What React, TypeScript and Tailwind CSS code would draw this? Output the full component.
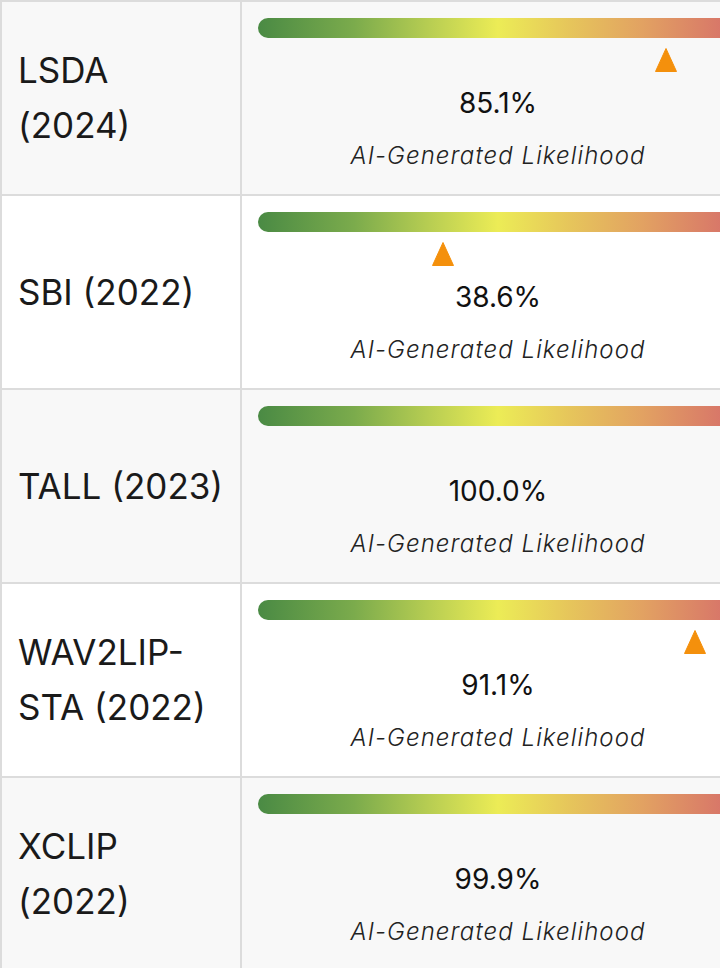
import React from 'react';

type Detector = {
  name: string;
  score: number;
};

const detectors: Detector[] = [
  { name: 'LSDA (2024)', score: 85.1 },
  { name: 'SBI (2022)', score: 38.6 },
  { name: 'TALL (2023)', score: 100.0 },
  { name: 'WAV2LIP-STA (2022)', score: 91.1 },
  { name: 'XCLIP (2022)', score: 99.9 },
];

const LikelihoodCell: React.FC<{ score: number }> = ({ score }) => (
  <div className="flex flex-col items-center pt-4 px-[14px]">
    {/* gradient scale */}
    <div className="w-[480px] h-5 shrink-0 rounded-full bg-[linear-gradient(to_right,#4a8a44_0%,#7bab4c_20%,#b5cc52_35%,#ecec56_50%,#e6c55b_65%,#e2a262_80%,#d66e6a_100%)]" />

    {/* marker */}
    <div className="relative w-[480px] h-6 mt-[10px]">
      <svg
        className="absolute top-0 -translate-x-1/2"
        style={{ left: `${score}%` }}
        width="22"
        height="24"
        viewBox="0 0 22 24"
      >
        <polygon points="11,0.5 21.5,23.5 0.5,23.5" fill="#f4900c" strokeLinejoin="round" stroke="#f4900c" strokeWidth="1" />
      </svg>
    </div>

    <div className="mt-[15px] text-[28px] leading-8 font-normal text-[#111]">{score.toFixed(1)}%</div>
    <div className="mt-[21px] text-[24px] leading-8 italic font-light tracking-[0.045em] text-[#222]">
      AI-Generated Likelihood
    </div>
  </div>
);

export default function App() {
  return (
    <div className="w-[720px] h-[968px] overflow-hidden bg-white font-['Inter','Liberation_Sans',sans-serif]">
      <div className="w-[754px] border-l-2 border-[#dcdcdc]">
        {detectors.map((d, i) => (
          <div
            key={d.name}
            className={`grid grid-cols-[240px_1fr] h-[194px] border-t-2 border-[#dcdcdc] ${
              i % 2 === 0 ? 'bg-[#f8f8f8]' : 'bg-white'
            }`}
          >
            <div className="flex items-center pl-4 pr-4 border-r-2 border-[#dcdcdc]">
              <span className="text-[35px] leading-[55px] text-[#1a1a1a]">{d.name}</span>
            </div>
            <LikelihoodCell score={d.score} />
          </div>
        ))}
      </div>
    </div>
  );
}
